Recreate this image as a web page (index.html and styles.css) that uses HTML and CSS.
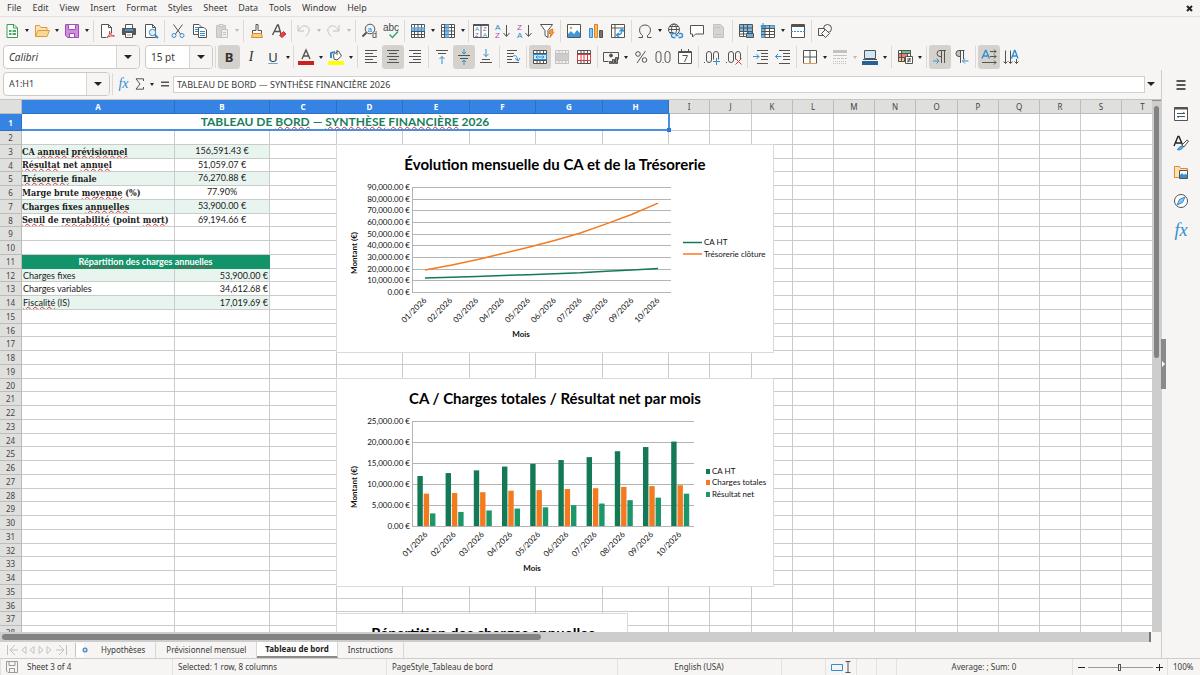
FILE: index.html
```html
<!DOCTYPE html>
<html lang="fr">
<head>
<meta charset="utf-8">
<title>Tableau de bord</title>
<link rel="stylesheet" href="styles.css">
</head>
<body>
<div class="app">
  <nav class="menubar">
    <button>File</button><button>Edit</button><button>View</button><button>Insert</button><button>Format</button><button>Styles</button><button>Sheet</button><button>Data</button><button>Tools</button><button>Window</button><button>Help</button>
    <button class="close" aria-label="Close"><svg class="ic" width="7" height="7" viewBox="0 0 7 7"><path class="dark w2" d="M1 1l5 5M6 1l-5 5"/></svg></button>
  </nav>

  <div class="toolbar">
    <button class="tb" aria-label="New"><svg class="ic" viewBox="0 0 16 16"><path class="green" fill="#fff" d="M3 1.500h7l3.500 3.500v9.500H3z"/><path class="green" d="M9.500 1.500V5h4"/><path class="fgreen" d="M5 7h7v5H5z"/><path stroke="#fff" d="M5 9.500h7M8 7v5"/></svg></button><button class="dd" aria-label="New options"></button>
    <button class="tb" aria-label="Open"><svg class="ic" viewBox="0 0 16 16"><path stroke="#e09a3e" fill="#fbe3b5" d="M1.500 13.500v-11h4l1.500 2h6v3"/><path stroke="#e09a3e" fill="#fad894" d="M1.500 13.500l2.500-6h11.500l-2.500 6z"/></svg></button><button class="dd" aria-label="Open options"></button>
    <button class="tb" aria-label="Save"><svg class="ic" viewBox="0 0 16 16"><path stroke="#a04cb4" fill="#d18be0" d="M1.500 1.500h13v13h-11l-2-2z"/><path stroke="#a04cb4" fill="#fff" d="M4.500 1.500h7v5h-7zM5.500 10.500h5v4h-5z"/></svg></button><button class="dd" aria-label="Save options"></button>
    <span class="sep"></span>
    <button class="tb" aria-label="Export PDF"><svg class="ic" viewBox="0 0 16 16"><path fill="#fff" d="M2.500 14.500v-13h7l3 3v6M9.500 1.500v3h3M2.500 14.500h5"/><path class="red" d="M8 14.500c2-1 3-4 2.500-6.500 0 3 2 5 5 5-3-.5-5 0-7.500 1.500z"/></svg></button>
    <button class="tb" aria-label="Print"><svg class="ic" viewBox="0 0 16 16"><path fill="#fff" d="M4.500 5.500v-4h7v4"/><path fill="#55595c" d="M1.500 5.500h13v6h-13z"/><path class="fblue" d="M4 6h8v2H4z"/><path fill="#fff" d="M4.500 9.500h7v5h-7z"/><path class="gray" d="M6 12h4"/></svg></button>
    <button class="tb" aria-label="Print preview"><svg class="ic" viewBox="0 0 16 16"><path fill="#fff" d="M2.500 14.500v-13h7l3 3v10z"/><path d="M9.500 1.500v3h3"/><circle class="blue" fill="#e3f1fb" cx="9.500" cy="9.500" r="3.200"/><path class="blue w2" d="M12 12l3 3"/></svg></button>
    <span class="sep"></span>
    <button class="tb" aria-label="Cut"><svg class="ic" viewBox="0 0 16 16"><path d="M3.500 1.500l7 9.500M12.500 1.500l-7 9.500"/><circle class="blue" cx="4" cy="12.500" r="2"/><circle class="blue" cx="12" cy="12.500" r="2"/></svg></button>
    <button class="tb" aria-label="Copy"><svg class="ic" viewBox="0 0 16 16"><path fill="#fff" d="M1.500 1.500h5.500l2 2v8H1.500z"/><path class="blue" d="M3 4.500h3M3 6.500h4M3 8.500h4"/><path fill="#fff" d="M6.500 4.500h5.500l2.500 2.500v7.500h-8z"/><path class="blue" d="M8 8.500h5M8 10.500h5M8 12.500h5"/></svg></button>
    <button class="tb" aria-label="Paste" disabled><svg class="ic" viewBox="0 0 16 16"><path class="faint" fill="#d5d4d2" d="M2.500 2.500h9v12h-9z"/><path class="faint" fill="#eee" d="M5 1.500h4v2H5zM7.500 6.500h6v8h-6z"/><path class="faint" d="M9 9.500h3M9 11.500h3"/></svg></button><button class="dd off" aria-label="Paste options"></button>
    <span class="sep"></span>
    <button class="tb" aria-label="Clone formatting"><svg class="ic" viewBox="0 0 16 16"><path fill="#fff" d="M7 1.500h2v6h3.500v3h-9v-3H7z"/><path stroke="#d98b2b" fill="#f9cf87" d="M3.500 10.500h9l.8 4H2.500z"/></svg></button>
    <button class="tb" aria-label="Clear formatting"><svg class="ic" viewBox="0 0 16 16"><path class="w15" d="M1.500 12l5-10h.8l3 10M4 8.500h5"/><path stroke="#d22f35" fill="#e0464b" d="M8.500 12.500l4-4 2.500 2.500-4 3.500z"/></svg></button>
    <span class="sep tight"></span>
    <button class="tb" aria-label="Undo" disabled><svg class="ic" viewBox="0 0 16 16"><path class="faint" d="M2 2v6h6M2.500 7.500C5 3 8 2 11 3.500c4 2.500 2 7-1.500 10"/></svg></button><button class="dd off" aria-label="Undo list"></button>
    <button class="tb" aria-label="Redo" disabled><svg class="ic" viewBox="0 0 16 16"><path class="faint" d="M13 2v6H7M12.500 7.500C10 3 7 2 4 3.500c-4 2.500-2 7 1.500 10"/></svg></button><button class="dd off" aria-label="Redo list"></button>
    <span class="sep"></span>
    <button class="tb" aria-label="Find and replace"><svg class="ic" viewBox="0 0 16 16"><circle fill="#eef6fc" cx="9" cy="6" r="4.800"/><path class="w2" d="M5.500 9.500l-4 4"/><text class="tblue" x="6.500" y="8.500" font-size="8">a</text><text x="11" y="15" font-size="9">d</text></svg></button>
    <button class="tb" aria-label="Spelling"><svg class="ic" viewBox="0 0 16 16"><text x="0" y="8" font-size="10">abc</text><path class="w15" stroke="#2fa567" d="M6.500 11.500l3 3 5.500-6"/></svg></button>
    <span class="sep"></span>
    <button class="tb" aria-label="Row"><svg class="ic" viewBox="0 0 16 16"><path fill="#fff" d="M1.500 1.500h13v13h-13z"/><path d="M4.500 1.500v13M8 1.500v13M11.500 1.500v13M1.500 8.500h13M1.500 11.500h13"/><path class="fblue" d="M1 4h14v4H1z"/></svg></button><button class="dd" aria-label="Row options"></button>
    <button class="tb" aria-label="Column"><svg class="ic" viewBox="0 0 16 16"><path fill="#fff" d="M1.500 1.500h13v13h-13z"/><path d="M1.500 4.500h13M1.500 8h13M1.500 11.500h13M4.500 1.500v13M11.500 1.500v13"/><path class="fblue" d="M5 1h4v14H5z"/></svg></button><button class="dd" aria-label="Column options"></button>
    <span class="sep tight"></span>
    <button class="tb" aria-label="Sort"><svg class="ic" viewBox="0 0 16 16"><path fill="#fff" d="M.5 1.500h15v13H.5z"/><path class="w2" d="M.5 2h15"/><path d="M8 2v12.500"/><text class="tblue" x="2" y="8" font-size="6">A</text><text class="tpurple" x="2" y="14" font-size="6">Z</text><text class="tpurple" x="10" y="8" font-size="6">Z</text><text class="tblue" x="10" y="14" font-size="6">A</text></svg></button>
    <button class="tb" aria-label="Sort ascending"><svg class="ic" viewBox="0 0 16 16"><text class="tblue" x="0" y="7" font-size="8">A</text><text class="tpurple" x="0" y="15" font-size="8">Z</text><path d="M11.500 2v11M8.500 10l3 3.500 3-3.500"/></svg></button>
    <button class="tb" aria-label="Sort descending"><svg class="ic" viewBox="0 0 16 16"><text class="tpurple" x="0" y="7" font-size="8">Z</text><text class="tblue" x="0" y="15" font-size="8">A</text><path d="M11.500 2v11M8.500 10l3 3.500 3-3.500"/></svg></button>
    <button class="tb" aria-label="AutoFilter"><svg class="ic" viewBox="0 0 16 16"><path fill="#fff" d="M1.500 1.500h12l-4.500 6v7l-3-2v-5z"/><path fill="#f6a13c" stroke="#dc8420" d="M11 7l3-1-1 3h2l-4 5.500 1-4h-2z"/></svg></button>
    <span class="sep"></span>
    <button class="tb" aria-label="Image"><svg class="ic" viewBox="0 0 16 16"><path fill="#fff" d="M1.500 1.500h13v13h-13z"/><path fill="#3f98d8" stroke="none" d="M2 14v-3l3-3 3 3 3-4 3 3v4z"/><circle cx="5" cy="5" r="1.300" fill="#f6a13c" stroke="none"/></svg></button>
    <button class="tb" aria-label="Chart"><svg class="ic" viewBox="0 0 16 16"><path class="blue" fill="#8cc5ee" d="M1.500 5.500h3v9h-3z"/><path stroke="#dc8420" fill="#f8b968" d="M6.500 1.500h3v13h-3z"/><path fill="#737373" d="M11.500 7.500h3v7h-3z"/></svg></button>
    <button class="tb" aria-label="Pivot table"><svg class="ic" viewBox="0 0 16 16"><path fill="#fff" d="M1.500 1.500h13v13h-13z"/><path d="M1.500 5h13M5 1.500v13"/><path class="blue w15" d="M7 12c4 0 5-2 5-5M9.500 8.500L12 6l2 2.500M9 10l-2.500 2L9 14"/></svg></button>
    <span class="sep"></span>
    <button class="tb" aria-label="Special character"><svg class="ic" viewBox="0 0 16 16"><path d="M1.500 14.500h4v-2C1 9.500 1.500 2 8 2s7 7.500 2.500 10.500v2h4"/></svg></button><button class="dd" aria-label="Character options"></button>
    <button class="tb" aria-label="Hyperlink"><svg class="ic" viewBox="0 0 16 16"><circle cx="7" cy="6.500" r="5.500"/><ellipse cx="7" cy="6.500" rx="2.500" ry="5.500"/><path d="M1.500 6.500h11M2.500 3.500h9M2.500 9.500h4"/><path class="blue w15" fill="#f6f5f4" d="M8.500 10.500h-2a2 2 0 000 4h2M11.500 10.500h2a2 2 0 010 4h-2M8.500 12.500h3"/></svg></button>
    <button class="tb" aria-label="Comment"><svg class="ic" viewBox="0 0 16 16"><path fill="#fff" d="M1.500 2.500h13v8.500h-8l-3 3v-3h-2z"/></svg></button>
    <button class="tb" aria-label="Headers and footers" disabled><svg class="ic" viewBox="0 0 16 16"><path class="faint" fill="#d5d4d2" d="M2.500 1.500h7l3 3v10h-10z"/><path class="faint" d="M4 4.500h5M4 11.500h7"/></svg></button>
    <span class="sep"></span>
    <button class="tb" aria-label="Print area"><svg class="ic" viewBox="0 0 16 16"><path fill="#fff" d="M1.500 1.500h13v12h-13z"/><path class="fblue" d="M2 2h12v7H2z"/><path d="M1.500 5h13M1.500 8.500h13M5.500 1.500v12M9.500 1.500v12M1.500 11h13"/><path fill="#6aaee0" d="M8.500 10.500h7v4h-7zM10 8.500h4v2h-4z"/></svg></button>
    <button class="tb" aria-label="Freeze"><svg class="ic" viewBox="0 0 16 16"><path fill="#fff" d="M1.500 2.500h13v12h-13z"/><path class="fblue" d="M1 2h14v3H1zM1 2h4v13H1z"/><path d="M1.500 5.500h13M1.500 8.500h13M1.500 11.500h13M5 2v12M9.500 2v12"/><path class="blue" d="M3 0v5M.5 3h5"/></svg></button><button class="dd" aria-label="Freeze options"></button>
    <button class="tb" aria-label="Split window"><svg class="ic" viewBox="0 0 16 16"><path fill="#fff" d="M1.500 1.500h13v13h-13z"/><path d="M1.500 3.500h13M1.500 2.500h13"/><path class="blue" stroke-dasharray="2 1" d="M1 8.500h14"/></svg></button>
    <span class="sep"></span>
    <button class="tb" aria-label="Draw functions"><svg class="ic" viewBox="0 0 16 16"><circle cx="10.500" cy="5.500" r="4"/><path fill="#f6f5f4" d="M1.500 5.500h6v7h-6z"/><path fill="#f6f5f4" d="M8.500 6.500l4 4-4 4-4-4z"/></svg></button>
  </div>

  <div class="toolbar second">
    <div class="combo font"><input value="Calibri" aria-label="Font name"><button aria-label="Font list"></button></div>
    <div class="combo size"><input value="15 pt" aria-label="Font size"><button aria-label="Size list"></button></div>
    <span class="sep"></span>
    <button class="tb on letter bold">B</button><button class="tb letter italic">I</button><button class="tb letter under">U</button><button class="dd" aria-label="Underline options"></button>
    <span class="sep tight"></span>
    <button class="tb" aria-label="Font color"><svg class="ic" viewBox="0 0 16 16"><path class="w15" d="M4 10l4-9 4 9M5.500 7h5"/><path fill="#c9211e" stroke="none" d="M0 12h16v4H0z"/></svg></button><button class="dd" aria-label="Font colors"></button>
    <button class="tb" aria-label="Highlight"><svg class="ic" viewBox="0 0 16 16"><path class="blue w2" d="M3 9V4l4-1"/><path fill="#fff" d="M5.500 5.500l5-3.500 3 5-4.500 4-3-1zM9 1v5"/><path fill="#ffff00" stroke="none" d="M0 12h16v4H0z"/></svg></button><button class="dd" aria-label="Highlight colors"></button>
    <span class="sep"></span>
    <button class="tb" aria-label="Align left"><svg class="ic" viewBox="0 0 16 16"><path d="M2 1.500h12M2 4.500h8M2 7.500h12M2 10.500h8M2 13.500h12"/></svg></button>
    <button class="tb on" aria-label="Center"><svg class="ic" viewBox="0 0 16 16"><path d="M2 1.500h12M4 4.500h8M2 7.500h12M4 10.500h8M2 13.500h12"/></svg></button>
    <button class="tb" aria-label="Align right"><svg class="ic" viewBox="0 0 16 16"><path d="M2 1.500h12M6 4.500h8M2 7.500h12M6 10.500h8M2 13.500h12"/></svg></button>
    <span class="sep"></span>
    <button class="tb" aria-label="Align top"><svg class="ic" viewBox="0 0 16 16"><path d="M2 1.500h12M4 4.500h8"/><path class="blue" d="M8 15V7.500M5.500 10L8 7.500l2.500 2.500"/></svg></button>
    <button class="tb on" aria-label="Center vertically"><svg class="ic" viewBox="0 0 16 16"><path d="M2 6.500h12M4 9.500h8"/><path class="blue" d="M8 0v4.500M6 3l2 2 2-2M8 16v-4.500M6 13l2-2 2 2"/></svg></button>
    <button class="tb" aria-label="Align bottom"><svg class="ic" viewBox="0 0 16 16"><path d="M4 10.500h8M2 13.500h12"/><path class="blue" d="M8 0v7.500M5.500 5L8 7.500 10.500 5"/></svg></button>
    <span class="sep"></span>
    <button class="tb" aria-label="Wrap text"><svg class="ic" viewBox="0 0 16 16"><path d="M2 1.500h10M2 4.500h7M2 7.500h6M2 10.500h5M2 13.500h12"/><path class="blue" d="M8 7c3-1 4 0 4.500 4M10 9.500l3 2.500 2-3"/></svg></button>
    <span class="sep"></span>
    <button class="tb on" aria-label="Merge and center"><svg class="ic" viewBox="0 0 16 16"><path fill="#fff" d="M1.500 1.500h13v13h-13z"/><path d="M1.500 4.500h13M1.500 11.500h13M5 1.500v3M8 1.500v3M11.500 1.500v3M5 11.500v3M8 11.500v3M11.500 11.500v3"/><path class="blue" fill="#cfe6f8" d="M1.500 5.500h13v5h-13zM4 8h8M5.500 6.500L4 8l1.500 1.500M10.500 6.500L12 8l-1.500 1.500"/></svg></button>
    <button class="tb" aria-label="Merge cells" disabled><svg class="ic" viewBox="0 0 16 16"><path class="faint" fill="#f0f0f0" d="M1.500 1.500h13v13h-13z"/><path class="faint" d="M1.500 4.500h13M1.500 11.500h13M5 1.500v3M8 1.500v3M11.500 1.500v3M5 11.500v3M8 11.500v3M11.500 11.500v3"/><path fill="#cdcccb" stroke="none" d="M2 5h12v6H2z"/></svg></button>
    <button class="tb" aria-label="Unmerge cells"><svg class="ic" viewBox="0 0 16 16"><path fill="#fff" d="M1.500 1.500h13v13h-13z"/><path d="M1.500 4.500h13M5 1.500v3M8 1.500v3M11.500 1.500v3M1.500 11.500h13M5 11.500v3M8 11.500v3M11.500 11.500v3"/><path class="red" d="M1.500 5.500h13v6h-13zM5 5.500v6M11.500 5.500v6M8 5.500v6"/></svg></button>
    <span class="sep"></span>
    <button class="tb" aria-label="Currency"><svg class="ic" viewBox="0 0 16 16"><path d="M.5 3.500h15v7M.5 3.500v9h5"/><circle cx="8" cy="6.500" r="1.500" fill="#4f4f4d"/><path fill="#8b8b89" d="M6.500 12.500h2v2h-2zM9.500 10.500h2v4h-2zM12.500 8.500h2v6h-2z"/></svg></button><button class="dd" aria-label="Currency options"></button>
    <button class="tb" aria-label="Percent"><svg class="ic" viewBox="0 0 16 16"><circle cx="5" cy="5" r="2.300"/><circle cx="11.500" cy="11" r="2.300"/><path d="M12.500 2l-8.500 12"/></svg></button>
    <button class="tb" aria-label="Number"><svg class="ic" viewBox="0 0 16 16"><rect x="1" y="2.500" width="5" height="11" rx="2.500"/><rect x="10" y="2.500" width="5" height="11" rx="2.500"/><path d="M7.500 13.500h1"/></svg></button>
    <button class="tb" aria-label="Date"><svg class="ic" viewBox="0 0 16 16"><path fill="#fff" d="M1.500 2.500h13v12h-13z"/><path d="M1.500 3.500h13M4.500 0v4M11.500 0v4M5.500 6.500h5l-3 6.500"/></svg></button>
    <span class="sep"></span>
    <button class="tb" aria-label="Add decimal"><svg class="ic" viewBox="0 0 16 16"><rect x="2.500" y="2.500" width="5" height="11" rx="2.500"/><rect x="9.500" y="2.500" width="5" height="11" rx="2.500"/><path d="M0 13.500h1"/><path stroke="#f6f5f4" stroke-width="4" d="M9 12.500h7"/><path class="blue" d="M9 12.500h7M12.500 9v7"/></svg></button>
    <button class="tb" aria-label="Remove decimal"><svg class="ic" viewBox="0 0 16 16"><rect x="2.500" y="2.500" width="5" height="11" rx="2.500"/><rect x="9.500" y="2.500" width="5" height="11" rx="2.500"/><path d="M0 13.500h1"/><path stroke="#f6f5f4" stroke-width="4" d="M9 12.500h7"/><path class="red" d="M9.500 9.500l6 6M15.500 9.500l-6 6"/></svg></button>
    <span class="sep"></span>
    <button class="tb" aria-label="Increase indent"><svg class="ic" viewBox="0 0 16 16"><path d="M4 1.500h11M8 4.500h7M8 7.500h7M8 10.500h7M4 14.500h11"/><path class="blue" d="M0 7.500h6M3.500 5L6 7.500 3.500 10"/></svg></button>
    <button class="tb" aria-label="Decrease indent"><svg class="ic" viewBox="0 0 16 16"><path d="M4 1.500h11M8 4.500h7M8 7.500h7M8 10.500h7M4 14.500h11"/><path class="blue" d="M.5 7.500h6M3 5L.5 7.500 3 10"/></svg></button>
    <span class="sep"></span>
    <button class="tb" aria-label="Borders"><svg class="ic" viewBox="0 0 16 16"><path fill="#fff" d="M1.500 1.500h13v13h-13z"/><path d="M8 1.500v13M1.500 8h13"/><path stroke="#e69a45" d="M1 14.500h14"/></svg></button><button class="dd" aria-label="Border options"></button>
    <button class="tb" aria-label="Border style" disabled><svg class="ic" viewBox="0 0 16 16"><path class="faint" stroke-width="3" d="M1 2.500h14"/><path class="faint" d="M1 6.500h14"/><path class="faint" stroke-dasharray="3 1" d="M1 9.500h14"/><path class="faint" stroke-dasharray="1 1" d="M1 12.500h14M1 14.500h14"/></svg></button><button class="dd off" aria-label="Border style options"></button>
    <button class="tb" aria-label="Border color"><svg class="ic" viewBox="0 0 16 16"><path fill="#cfe6f8" d="M2.500 1.500h11v8h-11z"/><path d="M1 10.500h14"/><path fill="#2a6099" stroke="none" d="M0 12h16v4H0z"/></svg></button><button class="dd" aria-label="Border colors"></button>
    <span class="sep"></span>
    <button class="tb" aria-label="Conditional formatting"><svg class="ic" viewBox="0 0 16 16"><path fill="#fff" d="M1.500 1.500h12v11h-12z"/><path fill="#6cc287" d="M4.500 1.500h9v3h-9z"/><path fill="#ee7d7d" d="M1.500 4.500h9v4h-9z"/><path fill="#f8c477" d="M1.500 8.500h6v4h-6z"/><path d="M4.500 1.500v11"/><path fill="#fff" d="M8.500 7.500h7v7h-7z"/><path d="M10 10h4M10 12h4M13 9l-2 4.500"/></svg></button><button class="dd" aria-label="Conditional options"></button>
    <span class="sep"></span>
    <button class="tb on" aria-label="Left to right"><svg class="ic" viewBox="0 0 16 16"><path d="M9.500 1.500V14M12.500 1.500V14M14 1.500H8a3 3 0 000 6h1.500"/><path class="blue" d="M1 12h6M4.500 9.500L7 12l-2.500 2.500"/></svg></button>
    <button class="tb" aria-label="Right to left"><svg class="ic" viewBox="0 0 16 16"><path fill="#c4c3c1" d="M5 1.500a3 3 0 000 6h1.500v-6z"/><path d="M6.500 1.500V14M9.500 1.500V10M10.500 1.500H5"/><path class="blue" d="M8.500 12h6M11 9.500L8.500 12l2.500 2.500"/></svg></button>
    <span class="sep"></span>
    <button class="tb on" aria-label="Horizontal text"><svg class="ic" viewBox="0 0 16 16"><path class="blue w15" d="M1 9.500l3.500-8h.5l3.500 8M2.500 7h5"/><path d="M9 2.500h6M13 .5l2 2-2 2M9 7.500h6M13 5.500l2 2-2 2M1 13.500h14M13 11.500l2 2-2 2"/></svg></button>
    <button class="tb" aria-label="Vertical text"><svg class="ic" viewBox="0 0 16 16"><path d="M2.500 1.500v13M.5 12.500l2 2 2-2M7.500 1.500v13M5.500 12.500l2 2 2-2M13.500 10v4.500M11.500 12.500l2 2 2-2"/><path class="blue w15" d="M8.500 9.500l3-8h.5l3 8M9.500 7h5"/></svg></button>
  </div>

  <div class="main">
    <section class="work">
      <div class="formula">
        <div class="combo name"><input value="A1:H1" aria-label="Name box"><button aria-label="Names"></button></div>
        <span class="sep"></span>
        <button class="fx" aria-label="Function wizard"><i>f</i>x</button>
        <button class="sum" aria-label="Select function"><svg class="ic" width="10" height="12" viewBox="0 0 10 12"><path d="M8.500 3V.8H1L5 6l-4 5.200h7.500V9"/></svg></button><button class="dd" aria-label="Functions"></button>
        <button class="eq" aria-label="Formula"><svg class="ic" width="10" height="8" viewBox="0 0 10 8"><path class="w15" d="M1 2.200h8M1 5.800h8"/></svg></button>
        <input class="line" value="TABLEAU DE BORD — SYNTHÈSE FINANCIÈRE 2026" aria-label="Input line">
        <button class="expand" aria-label="Expand"></button>
      </div>
      <div class="sheetrow">
        <div class="sheet">
          <table class="grid" id="grid"></table>
          <div class="selection"><span class="handle"></span></div>
          <svg class="chart" id="lines" width="438" height="209"></svg>
          <svg class="chart second-chart" id="bars" width="438" height="209"></svg>
          <svg class="chart third-chart" width="292" height="208"><text class="title" x="146" y="25">Répartition des charges annuelles</text></svg>
        </div>
        <div class="vscroll"><span class="thumb"></span></div>
      </div>
      <div class="hscroll"><span class="thumb"></span></div>
      <div class="tabs">
        <svg class="ic navs" width="62" height="12" viewBox="0 0 62 12"><path class="faint" d="M1.500 1v10M9 1L4 6l5 5M4 6h8M20 2.500L16 6l4 3.500zM28 2.500L24 6l4 3.500zM33 2.500L37 6l-4 3.500zM41 2.500L45 6l-4 3.500zM53 1l5 5-5 5M58 6h-8M60.500 1v10"/></svg>
        <button class="add" aria-label="Add sheet"><svg class="ic" width="14" height="14" viewBox="0 0 14 14"><path fill="#fff" stroke="none" d="M1 0h8v14H1z"/><path class="faint" d="M.5 0v14"/><circle cx="10" cy="7" r="2.500" fill="#3a76bd" stroke="none"/><path stroke="#fff" d="M8.500 7h3M10 5.500v3"/></svg></button>
        <button class="tab">Hypothèses</button><button class="tab">Prévisionnel mensuel</button><button class="tab active">Tableau de bord</button><button class="tab">Instructions</button>
      </div>
    </section>
    <aside class="sidebar">
      <span class="grip"></span>
      <button aria-label="Settings"><svg class="ic" viewBox="0 0 16 16"><path class="dark w15" d="M3.500 4h9M3.500 8h9M3.500 12h9"/></svg></button>
      <button aria-label="Properties"><svg class="ic" viewBox="0 0 16 16"><path fill="#fff" d="M1.500 1.500h13v13h-13z"/><path class="w2" d="M1.500 2.500h13"/><path d="M4 7.500h8M4 10.500h8"/><path class="blue" d="M10 6l2 1.500M4 10.500L6 12"/></svg></button>
      <button aria-label="Styles"><svg class="ic" viewBox="0 0 16 16"><path class="w15 dark" d="M1 11L5 1.500h1L10 11M3 8h5"/><path fill="#fff" d="M9 10l5-5 1.500 1-4.500 6z"/><path class="blue" fill="#5aa9e0" d="M4 14.500c2 0 2-4 5-3.500l1 1.500c-1 2-4 3-6 2z"/></svg></button>
      <button aria-label="Gallery"><svg class="ic" viewBox="0 0 16 16"><path stroke="#e08c2e" fill="#fbe3b5" d="M1.500 13.500v-11h5l1 2h7v9z"/><path fill="#fff" d="M6.500 6.500h8v8h-8z"/><path fill="#3a8fd0" stroke="none" d="M7 14v-3l2-2 2 2 1.500-1.500L14 11v3z"/></svg></button>
      <button aria-label="Navigator"><svg class="ic" viewBox="0 0 16 16"><circle cx="8" cy="8" r="6.500" fill="#fff"/><path class="blue" fill="#8cc5ee" d="M12 4l-2.500 5.500L4 12l2.500-5.500z"/></svg></button>
      <button class="fx big" aria-label="Functions"><i>f</i>x</button>
    </aside>
  </div>

  <footer class="status">
    <span class="cell pic"><svg class="ic" width="12" height="12" viewBox="0 0 12 12"><path stroke="#9a9996" d="M.5.500h11v11H2l-1.500-1.500zM3 .5v4h6v-4M3.500 11.500v-4h5v4"/></svg></span>
    <span class="cell first">Sheet 3 of 4</span>
    <span class="cell">Selected: 1 row, 8 columns</span>
    <span class="cell">PageStyle_Tableau de bord</span>
    <span class="cell mid">English (USA)</span>
    <span class="cell"></span>
    <span class="cell pic"><svg class="ic" width="20" height="12" viewBox="0 0 20 12"><path class="blue" d="M.5 3.500h11v6H.5z"/><path d="M14.500.5h5M14.500 11.500h5M17 .5v11"/></svg></span>
    <span class="cell"></span>
    <span class="cell"></span>
    <span class="cell mid">Average: ; Sum: 0</span>
    <span class="cell zoom"><button class="minus" aria-label="Zoom out"></button><input type="range" min="0" max="100" value="49" aria-label="Zoom"><button class="plus" aria-label="Zoom in"></button></span>
    <span class="cell pct">100%</span>
  </footer>
</div>
<script src="app.js"></script>
</body>
</html>
```

FILE: styles.css
```css
* { box-sizing: border-box; }
html, body { height: 100%; }
body { margin: 0; background: #f6f5f4; color: #3a3a3a; font: 9px/12px "Noto Sans", sans-serif; overflow: hidden; }
button, input { font: inherit; color: inherit; border: 0; padding: 0; margin: 0; background: none; outline: 0; }
.app { display: flex; flex-direction: column; height: 100vh; }

/* Menu */
.menubar { display: flex; align-items: center; gap: 11px; height: 17px; padding: 0 7px; border-bottom: 1px solid #e3e1df; flex: none; }
.close { margin-left: auto; display: flex; }

/* Icons */
.ic { fill: none; stroke: #535351; stroke-width: 1; width: 16px; height: 16px; display: block; overflow: visible; }
.ic[width] { width: auto; height: auto; }
.ic text { stroke: none; fill: #4a4a48; font-family: "Liberation Sans", sans-serif; }
.ic .tblue { fill: #2a86c8; }
.ic .tpurple { fill: #a44cb8; }
.w15 { stroke-width: 1.4; }
.w2 { stroke-width: 2; }
.dark { stroke: #222; }
.blue { stroke: #2f8fd3; }
.green { stroke: #3d9b55; }
.red { stroke: #dd3a40; }
.gray { stroke: #999; }
.faint { stroke: #c3c2c0; }
.fblue { fill: #4ba3e3; stroke: none; fill-opacity: .75; }
.fgreen { fill: #4cae68; stroke: none; }

/* Toolbars */
.toolbar { display: flex; align-items: center; height: 27px; padding-left: 1px; flex: none; }
.toolbar.second { height: 26px; padding-left: 3px; }
.tb { width: 22px; height: 24px; flex: none; display: flex; align-items: center; justify-content: center; border-radius: 3px; }
.tb.on { background: #d5d2ce; }
.letter { font-size: 13px; color: #333; }
.bold { font-weight: 700; }
.italic { font-family: "Liberation Serif", serif; font-style: italic; font-size: 14px; }
.under { text-decoration: underline; text-decoration-color: #62a8dc; }
.dd, .combo button, .expand { display: flex; align-items: center; justify-content: center; flex: none; }
.dd { width: 8px; height: 24px; }
.dd::before, .combo button::before, .expand::before { content: ""; border: 3px solid transparent; border-top-color: #222; border-bottom: 0; }
.combo button::before, .expand::before { border-width: 4px 4px 0; }
.dd::before { border-width: 3px 2px 0; }
.dd.off::before { border-top-color: #bbb; }
.sep { width: 5px; height: 22px; flex: none; background: linear-gradient(#dcdad7, #dcdad7) center / 1px 100% no-repeat; }
.sep.tight { width: 3px; }
.combo { display: flex; height: 24px; border: 1px solid #cdc9c5; border-radius: 4px; background: #fff; overflow: hidden; flex: none; }
.combo input { flex: 1; min-width: 0; padding-left: 5px; }
.combo button { width: 23px; background: #f6f5f4; border-left: 1px solid #d8d5d2; }
.font { width: 137px; margin-right: 5px; font-size: 10px; font-style: italic; }
.size { width: 68px; font-size: 10px; }
.name { width: 107px; }

/* Work area */
.main { display: flex; flex: 1; min-height: 0; }
.work { display: flex; flex-direction: column; flex: 1; min-width: 0; }
.formula { display: flex; align-items: center; height: 29px; padding: 0 4px 1px 3px; flex: none; }
.fx { font: 14px/16px "Liberation Serif", serif; font-style: italic; color: #2f8fd3; width: 15px; }
.formula .fx { margin-left: 1px; }
.big { font-size: 18px; }
.sum { width: 17px; display: flex; justify-content: center; }
.eq { width: 17px; display: flex; justify-content: center; }
.line { flex: 1; min-width: 0; height: 17px; padding: 0 3px; border: 1px solid #d3d0cd; background: #fff; font-size: 9px; }
.expand { width: 12px; height: 17px; }

.sheetrow { display: flex; flex: 1; min-height: 0; border-top: 1px solid #c4c4c4; }
.sheet { position: relative; flex: 1; min-width: 0; overflow: hidden; background: #fff; }
.grid { table-layout: fixed; border-collapse: separate; border-spacing: 0; width: 1163px; font-family: Lato, sans-serif; font-size: 9px; line-height: 12px; color: #1b1b1b; }
.grid th, .grid td { padding: 0; height: 14px; border: solid #cbcbcb; border-width: 0 1px 1px 0; overflow: hidden; white-space: nowrap; }
.grid th { font: 8px/12px "Noto Sans", sans-serif; color: #444; background: #dfdfde; border-color: #bcbcbb; text-align: center; }
.grid .sel th, .grid th.sel { background: #3584e4; border-color: #2c70c4; color: #fff; font-weight: 700; }
.grid tbody tr:nth-child(4n) > * { height: 13px; line-height: 11px; }
.grid tbody tr:first-child > * { height: 17px; line-height: 15px; }
.grid .tint { background: #e8f5ef; }
.grid .label { font: 700 9px/12px "DejaVu Serif Condensed", "DejaVu Serif", serif; }
.grid .item { padding-left: 1px; }
.grid .num { text-align: right; padding-right: 1px; }
.grid .center { text-align: center; vertical-align: top; line-height: 11px; }
.grid .band { background: #12936a; border-color: #12936a; color: #fff; font-weight: 700; text-align: center; }
.grid .heading { text-align: center; vertical-align: top; font-size: 12px; line-height: 14px; font-weight: 700; color: #1a805c; }
.sp { text-decoration: underline wavy #e02a2e 1px; text-decoration-skip-ink: none; text-underline-offset: 0; }
.selection { position: absolute; left: 22px; top: 13px; width: 648px; height: 18px; border: solid #4a90e2; border-width: 0 2px 2px 0; }
.handle { position: absolute; right: -3px; bottom: -3px; width: 4px; height: 4px; background: #2c78d8; }

/* Floating charts */
.chart { position: absolute; left: 336px; top: 44px; background: #fff; border: 1px solid #dadada; font: 8px Lato, sans-serif; fill: #111; }
.second-chart { top: 278px; }
.third-chart { top: 513px; }
.chart .title { font-size: 15px; font-weight: 700; text-anchor: middle; fill: #000; }
.chart .axis { font-weight: 700; text-anchor: middle; }
.chart .end { text-anchor: end; }
.chart .rule { stroke: #b3b3b3; stroke-width: 1; }
.chart polyline { fill: none; stroke-width: 1.5; }
.c1 { fill: #137a55; stroke: #137a55; }
.c2 { fill: #f47a1f; stroke: #f47a1f; }
.c3 { fill: #1c976b; stroke: #1c976b; }
.chart rect { stroke: none; }

/* Scroll bars */
.vscroll { width: 9px; background: #cdcdcd; padding: 5px 2px 0 2px; border-top: 1px solid #8f8f8f; flex: none; }
.vscroll .thumb { display: block; height: 48%; border-radius: 3px; background: #828282; }
.hscroll { height: 10px; margin-right: 10px; padding: 2px 0 2px 2px; background: #cdcdcd; border-right: 2px solid #777; flex: none; }
.hscroll .thumb { display: block; width: 47%; height: 6px; border-radius: 3px; background: #828282; }

/* Sheet tabs */
.tabs { display: flex; height: 16px; align-items: stretch; padding-left: 6px; font-size: 8px; flex: none; }
.navs { align-self: center; }
.add { width: 23px; padding-left: 7px; display: flex; align-items: center; }
.tab { padding: 0 10px; border-right: 1px solid #d9d7d4; line-height: 12px; }
.tab.active { background: #fff; font-weight: 700; color: #222; padding: 0 8px; border-bottom: 2px solid #8b8b8b; }

/* Sidebar */
.sidebar { position: relative; width: 39px; padding-top: 7px; border-left: 1px solid #cfccc9; display: flex; flex-direction: column; align-items: center; gap: 13px; flex: none; }
.sidebar button { height: 16px; flex: none; }
.sidebar .fx { width: 16px; }
.grip { position: absolute; left: -1px; top: 269px; width: 5px; height: 50px; background: #8a8a8a; }
.grip::before { content: ""; position: absolute; left: 1px; top: 22px; border: 3px solid transparent; border-left-color: #fff; border-right: 0; }

/* Status bar */
.status { display: grid; grid-template-columns: 22px 150fr 214fr 231fr 164fr 44px 31px 20px 20px 176fr 95px 33px; height: 17px; border-top: 1px solid #cfccc9; font-size: 8px; line-height: 16px; flex: none; }
.cell { padding-left: 6px; box-shadow: inset 1px 0 #e4e2e0; white-space: nowrap; overflow: hidden; }
.cell.first { padding-left: 5px; box-shadow: none; }
.cell.pic { display: flex; align-items: center; }
.mid { text-align: center; padding: 0; }
.zoom { display: flex; align-items: center; gap: 3px; padding-left: 6px; }
.zoom input { appearance: none; width: 65px; height: 8px; background: linear-gradient(#999, #999) center / 100% 1px no-repeat; }
.zoom input::-webkit-slider-thumb { appearance: none; width: 3px; height: 7px; border: 1px solid #555; background: #eee; }
.minus, .plus { width: 7px; height: 7px; flex: none; background: linear-gradient(#222, #222) center / 7px 1px no-repeat; }
.plus { background: linear-gradient(#222, #222) center / 7px 1px no-repeat, linear-gradient(#222, #222) center / 1px 7px no-repeat; }
```

FILE: app.js
```js
const widths = [22, 153, 95, 67, 66, 67, 66, 67, 66, 41, 42, 41, 41, 41, 41, 42, 41, 41, 41, 41, 42];
const letters = 'ABCDEFGHIJKLMNOPQRST'.split('');
const empty = n => '<td></td>'.repeat(n);
// Words between underscores carry the spell-check underline.
const spell = s => s.replace(/_(.+?)_/g, '<span class="sp">$1</span>');

const rows = {
  1: '<td class="heading" colspan="8">' + spell('TABLEAU DE _BORD_ — _SYNTHÈSE_ _FINANCIÈRE_ 2026') + '</td>' + empty(12),
  11: '<td class="band" colspan="2">' + spell('_Répartition_ des charges _annuelles_') + '</td>' + empty(18)
};
[
  ['CA _annuel_ _prévisionnel_', '156,591.43 €'],
  ['_Résultat_ net _annuel_', '51,059.07 €'],
  ['_Trésorerie_ finale', '76,270.88 €'],
  ['Marge brute _moyenne_ (%)', '77.90%'],
  ['Charges fixes _annuelles_', '53,900.00 €'],
  ['_Seuil_ de _rentabilité_ (point _mort_)', '69,194.66 €']
].forEach(([name, value], i) => {
  const tint = i % 2 ? '' : ' tint';
  rows[i + 3] = `<td class="label${tint}">${spell(name)}</td><td class="center${tint}">${value}</td>` + empty(18);
});
[
  ['Charges fixes', '53,900.00 €'],
  ['Charges variables', '34,612.68 €'],
  ['_Fiscalité_ (IS)', '17,019.69 €']
].forEach(([name, value], i) => {
  const tint = i % 2 ? '' : ' tint';
  rows[i + 12] = `<td class="item${tint}">${spell(name)}</td><td class="num${tint}">${value}</td>` + empty(18);
});

let html = '<colgroup>' + widths.map(w => `<col style="width:${w}px">`).join('') + '</colgroup><thead><tr><th></th>';
html += letters.map((l, i) => `<th${i < 8 ? ' class="sel"' : ''}>${l}</th>`).join('') + '</tr></thead><tbody>';
for (let r = 1; r <= 38; r++) {
  html += `<tr${r === 1 ? ' class="sel"' : ''}><th>${r}</th>${rows[r] || empty(20)}</tr>`;
}
document.getElementById('grid').innerHTML = html + '</tbody>';

const months = ['01', '02', '03', '04', '05', '06', '07', '08', '09', '10'].map(m => m + '/2026');
const revenue = [11900, 12600, 13250, 14150, 14800, 15700, 16400, 17800, 18800, 20100];
const cash = [18800, 23000, 27700, 33000, 38400, 44200, 50600, 58400, 66700, 76200];
const costs = [7700, 7850, 8050, 8400, 8550, 8800, 9000, 9300, 9500, 9700];
const profit = [3000, 3350, 3700, 4150, 4450, 4950, 5350, 6150, 6750, 7700];
const left = 75, top0 = 42, base = 147;

function frame(title, right, max, step) {
  let s = `<text class="title" x="218" y="25">${title}</text>`;
  for (let v = 0; v <= max; v += step) {
    const y = Math.round(base - v / max * (base - top0));
    s += `<path class="rule" d="M${left} ${y}.5H${right}"/>`;
    s += `<text class="end" x="73" y="${y + 3}">${v.toLocaleString('en-US')}.00 €</text>`;
  }
  s += `<path class="rule" d="M${left}.5 ${top0}V${base}"/>`;
  const pitch = (right - left) / 10;
  months.forEach((m, i) => {
    const x = left + pitch * (i + .5);
    s += `<text class="end" transform="translate(${x + 2} ${base + 9}) rotate(-45)">${m}</text>`;
  });
  s += `<text class="axis" transform="translate(20 108) rotate(-90)">Montant (€)</text>`;
  s += `<text class="axis" x="${Math.round((left + right) / 2) - 21}" y="192">Mois</text>`;
  return s;
}

function lineChart() {
  const right = 334, pitch = (right - left) / 10;
  const pts = d => d.map((v, i) => `${left + pitch * (i + .5)},${base - v / 90000 * (base - top0)}`).join(' ');
  return frame('Évolution mensuelle du CA et de la Trésorerie', right, 90000, 10000) +
    `<polyline class="c1" points="${pts(revenue)}"/><polyline class="c2" points="${pts(cash)}"/>` +
    '<polyline class="c1" points="346,97.500 365,97.500"/><text x="367" y="100">CA HT</text>' +
    '<polyline class="c2" points="346,109 365,109"/><text x="367" y="112">Trésorerie clôture</text>';
}

function barChart() {
  const right = 357, pitch = (right - left) / 10;
  let s = frame('CA / Charges totales / Résultat net par mois', right, 25000, 5000);
  [revenue, costs, profit].forEach((d, k) => d.forEach((v, i) => {
    const h = v / 25000 * (base - top0);
    s += `<rect class="c${k + 1}" x="${left + pitch * i + 5.4 + 6.3 * k}" y="${base - h}" width="5.400" height="${h}"/>`;
  }));
  ['CA HT', 'Charges totales', 'Résultat net'].forEach((t, k) => {
    const y = 92 + Math.round(11.4 * k);
    s += `<rect class="c${k + 1}" x="369" y="${y - 2}" width="4" height="5"/><text x="375" y="${y + 3}">${t}</text>`;
  });
  return s;
}
document.getElementById('lines').innerHTML = lineChart();
document.getElementById('bars').innerHTML = barChart();
```
